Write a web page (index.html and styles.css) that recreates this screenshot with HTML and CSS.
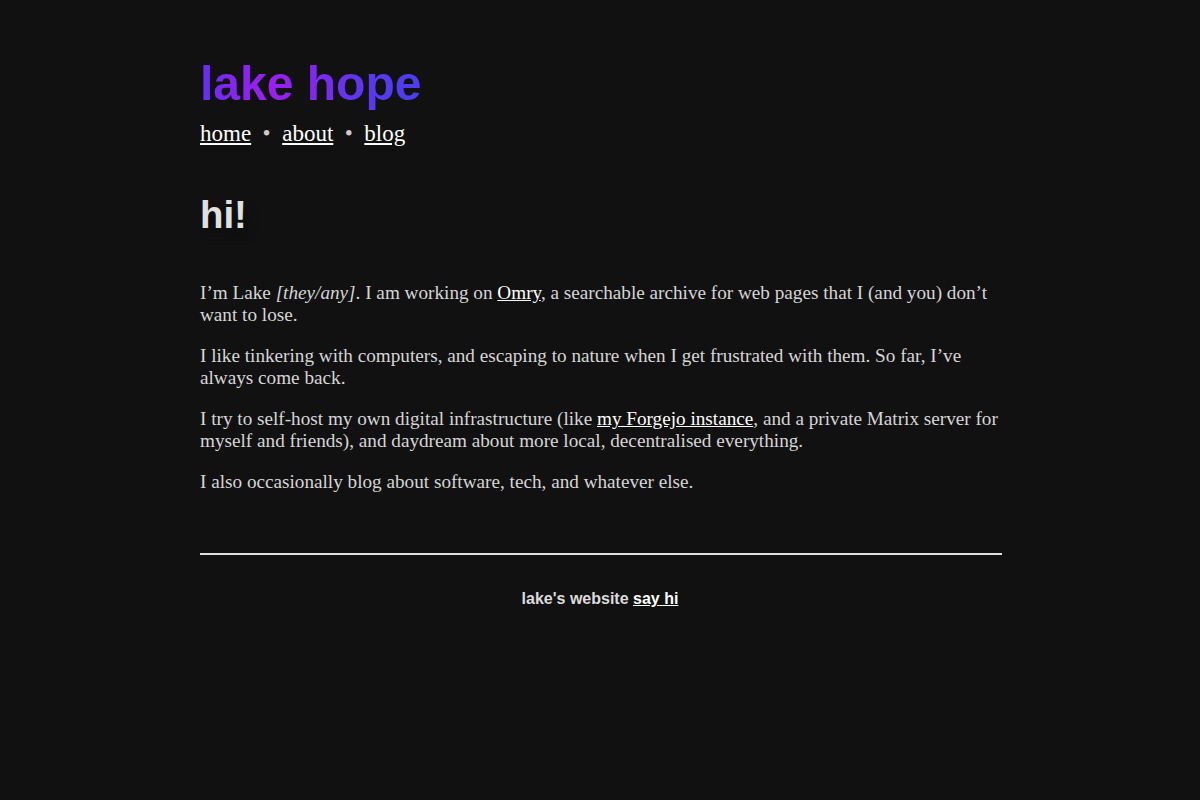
FILE: index.html
```html
<!DOCTYPE html>
<html lang="en">
<head>
<meta charset="utf-8">
<title>lake hope</title>
<link rel="stylesheet" href="styles.css">
</head>
<body>
<div class="page">
  <header class="site-header">
    <h1 class="site-title">lake hope</h1>
    <nav class="nav">
      <a href="#">home</a><span class="sep">•</span><a href="#">about</a><span class="sep">•</span><a href="#">blog</a>
    </nav>
  </header>
  <main class="content">
    <h2 class="greeting">hi!</h2>
    <p>I’m Lake <em>[they/any]</em>. I am working on <a href="#">Omry</a>, a searchable archive for web pages that I (and you) don’t want to lose.</p>
    <p>I like tinkering with computers, and escaping to nature when I get frustrated with them. So far, I’ve always come back.</p>
    <p>I try to self-host my own digital infrastructure (like <a href="#">my Forgejo instance</a>, and a private Matrix server for myself and friends), and daydream about more local, decentralised everything.</p>
    <p>I also occasionally blog about software, tech, and whatever else.</p>
  </main>
  <hr class="rule">
  <footer class="footer">lake's website <a href="#">say hi</a></footer>
</div>
</body>
</html>
```

FILE: styles.css
```css
html, body {
  margin: 0;
  padding: 0;
  background: #111111;
}
body {
  color: #dcdcdc;
  font-family: "Liberation Serif", "Times New Roman", serif;
}
.page {
  width: 800px;
  margin: 0 auto;
  padding-top: 55px;
}
a {
  color: #ffffff;
  text-decoration: underline;
}
.site-title {
  margin: 0;
  display: inline-block;
  font-family: "Liberation Sans", Arial, sans-serif;
  font-weight: bold;
  font-size: 48px;
  line-height: 1.2;
  background: linear-gradient(90deg, #6230f2 0%, #8a24f0 18%, #9a1ff0 32%, #8426f0 50%, #5e36f0 72%, #4a3ef0 100%);
  -webkit-background-clip: text;
  background-clip: text;
  color: transparent;
}
.nav {
  margin-top: 7px;
  font-size: 23px;
  line-height: 1.2;
  display: flex;
  align-items: baseline;
}
.sep {
  color: #cccccc;
  padding: 0 11.5px;
}
.content {
  margin-top: 45px;
}
.greeting {
  margin: 0 0 44px 0;
  font-family: "Liberation Sans", Arial, sans-serif;
  font-weight: bold;
  font-size: 38.4px;
  line-height: 1.2;
  color: #e0e0e0;
  text-shadow: 6px 8px 10px rgba(0, 0, 0, 0.25);
}
.content p {
  margin: 0 0 19px 0;
  font-size: 19.2px;
  line-height: 22px;
  color: #d6d6d6;
}
.content p:last-child {
  margin-bottom: 0;
}
.rule {
  margin: 60px -2px 0 0;
  border: 0;
  border-top: 2px solid #dedede;
  height: 0;
}
.footer {
  margin-top: 34px;
  text-align: center;
  font-family: "Liberation Sans", Arial, sans-serif;
  font-weight: bold;
  font-size: 16px;
  line-height: 1.2;
  color: #dcdcdc;
}
```
